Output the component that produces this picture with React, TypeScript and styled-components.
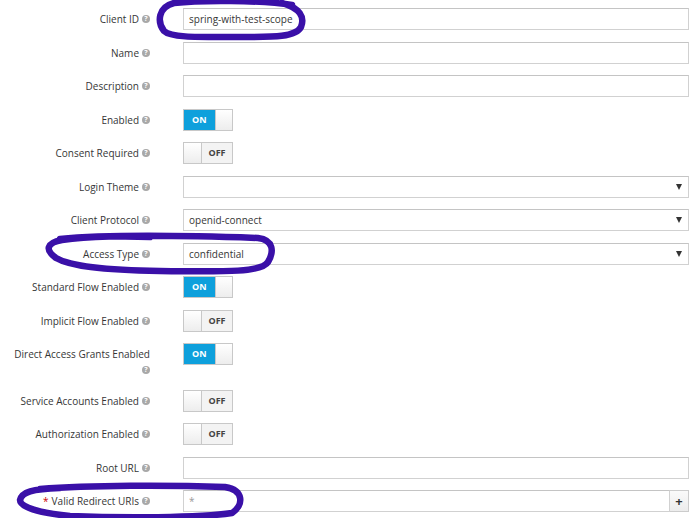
import React from "react";
import styled, { createGlobalStyle } from "styled-components";

const Global = createGlobalStyle`
  html, body { margin: 0; padding: 0; background: #fff; }
  body { font-family: "Open Sans", "Liberation Sans", sans-serif; color: #363636; }
`;

const Page = styled.div`
  position: relative;
  width: 700px;
  height: 518px;
  overflow: hidden;
  background: #fff;
`;

const Form = styled.div`
  display: grid;
  grid-template-columns: 150px 506px;
  column-gap: 33px;
  row-gap: 11.5px;
  padding-top: 8px;
  align-items: start;
`;

const Label = styled.div<{ $wrap?: boolean }>`
  font-size: 10px;
  line-height: 16px;
  padding-top: 3px;
  text-align: right;
  color: #363636;
  white-space: ${(p) => (p.$wrap ? "normal" : "nowrap")};
`;

const Required = styled.span`
  color: #c00;
  margin-right: 3px;
`;

const Help = styled.span<{ $block?: boolean }>`
  display: inline-flex;
  align-items: center;
  justify-content: center;
  width: 8px;
  height: 8px;
  margin-left: 3px;
  border-radius: 50%;
  background: #a8a8a8;
  color: #fff;
  font-size: 7px;
  font-weight: 700;
  vertical-align: 2px;
  ${(p) => (p.$block ? "margin-top: 3px;" : "")}
`;

const Text = styled.div`
  box-sizing: border-box;
  height: 22px;
  border: 1px solid #d1d1d1;
  border-top-color: #c4c4c4;
  background: #fff;
  font-size: 10px;
  line-height: 20px;
  padding: 0 5px;
  color: #363636;
`;

const SelectBox = styled(Text)`
  display: flex;
  align-items: center;
  justify-content: space-between;
  padding-right: 6px;
`;

const Caret = styled.span`
  width: 0;
  height: 0;
  border-left: 3px solid transparent;
  border-right: 3px solid transparent;
  border-top: 6px solid #333;
`;

const Group = styled.div`
  display: flex;
  height: 22px;
`;

const GroupInput = styled(Text)`
  flex: 1;
  color: #999;
`;

const AddBtn = styled.div`
  box-sizing: border-box;
  width: 19px;
  height: 22px;
  border: 1px solid #ccc;
  border-left: none;
  background: linear-gradient(#fafafa, #ececec);
  font-size: 13px;
  font-weight: 700;
  line-height: 20px;
  text-align: center;
  color: #333;
`;

const Switch = styled.div`
  box-sizing: border-box;
  display: flex;
  width: 50px;
  height: 22px;
  border: 1px solid #c8c8c8;
  overflow: hidden;
`;

const OnPart = styled.div`
  width: 32px;
  background: #0ea0dc;
  color: #fff;
  font-size: 9px;
  font-weight: 700;
  line-height: 20px;
  text-align: center;
`;

const OffPart = styled.div`
  flex: 1;
  background: #f3f3f3;
  color: #444;
  font-size: 9px;
  font-weight: 700;
  line-height: 20px;
  text-align: center;
`;

const Knob = styled.div<{ $left?: boolean }>`
  width: 17px;
  background: linear-gradient(#ffffff, #ededed);
  ${(p) => (p.$left ? "border-right: 1px solid #c8c8c8;" : "border-left: 1px solid #c8c8c8;")}
`;

const Overlay = styled.svg`
  position: absolute;
  left: 0;
  top: 0;
  pointer-events: none;
`;

type Kind =
  | { t: "text"; v?: string }
  | { t: "select"; v?: string }
  | { t: "switch"; on: boolean }
  | { t: "group"; v: string };

type Row = { label: string; kind: Kind; req?: boolean; wrap?: boolean };

const rows: Row[] = [
  { label: "Client ID", kind: { t: "text", v: "spring-with-test-scope" } },
  { label: "Name", kind: { t: "text" } },
  { label: "Description", kind: { t: "text" } },
  { label: "Enabled", kind: { t: "switch", on: true } },
  { label: "Consent Required", kind: { t: "switch", on: false } },
  { label: "Login Theme", kind: { t: "select" } },
  { label: "Client Protocol", kind: { t: "select", v: "openid-connect" } },
  { label: "Access Type", kind: { t: "select", v: "confidential" } },
  { label: "Standard Flow Enabled", kind: { t: "switch", on: true } },
  { label: "Implicit Flow Enabled", kind: { t: "switch", on: false } },
  { label: "Direct Access Grants Enabled", kind: { t: "switch", on: true }, wrap: true },
  { label: "Service Accounts Enabled", kind: { t: "switch", on: false } },
  { label: "Authorization Enabled", kind: { t: "switch", on: false } },
  { label: "Root URL", kind: { t: "text" } },
  { label: "Valid Redirect URIs", kind: { t: "group", v: "*" }, req: true },
];

function Field({ kind }: { kind: Kind }) {
  switch (kind.t) {
    case "text":
      return <Text>{kind.v}</Text>;
    case "select":
      return (
        <SelectBox>
          <span>{kind.v}</span>
          <Caret />
        </SelectBox>
      );
    case "switch":
      return kind.on ? (
        <Switch>
          <OnPart>ON</OnPart>
          <Knob />
        </Switch>
      ) : (
        <Switch>
          <Knob $left />
          <OffPart>OFF</OffPart>
        </Switch>
      );
    case "group":
      return (
        <Group>
          <GroupInput>{kind.v}</GroupInput>
          <AddBtn>+</AddBtn>
        </Group>
      );
  }
}

export default function App() {
  return (
    <Page>
      <Global />
      <Form>
        {rows.map((r) => (
          <React.Fragment key={r.label}>
            <Label $wrap={r.wrap}>
              {r.req && <Required>*</Required>}
              {r.label}
              {r.wrap ? <br /> : null}
              <Help $block={r.wrap}>?</Help>
            </Label>
            <Field kind={r.kind} />
          </React.Fragment>
        ))}
      </Form>
      <Overlay width="700" height="518" viewBox="0 0 700 518">
        <g fill="none" stroke="#3a10a8" strokeWidth="6.5" strokeLinecap="round" strokeLinejoin="round">
          <path d="M292 5 C 260 0, 200 0, 174 3 C 158 7, 157 22, 164 31 C 171 38, 200 37, 240 37 C 275 37, 296 37, 301 27 C 305 17, 300 8, 282 3" />
          <path d="M60 239 C 110 234, 200 236, 258 238 C 274 240, 274 252, 268 262 C 262 272, 230 272, 160 271 C 100 270, 70 266, 56 258 C 45 250, 46 243, 62 240 C 90 236, 130 236, 150 237" />
          <path d="M40 489 C 90 485, 170 485, 225 487 C 244 490, 244 505, 232 513 C 200 518, 120 518, 70 516 C 40 513, 20 507, 20 500 C 22 492, 32 489, 60 488" />
        </g>
      </Overlay>
    </Page>
  );
}
